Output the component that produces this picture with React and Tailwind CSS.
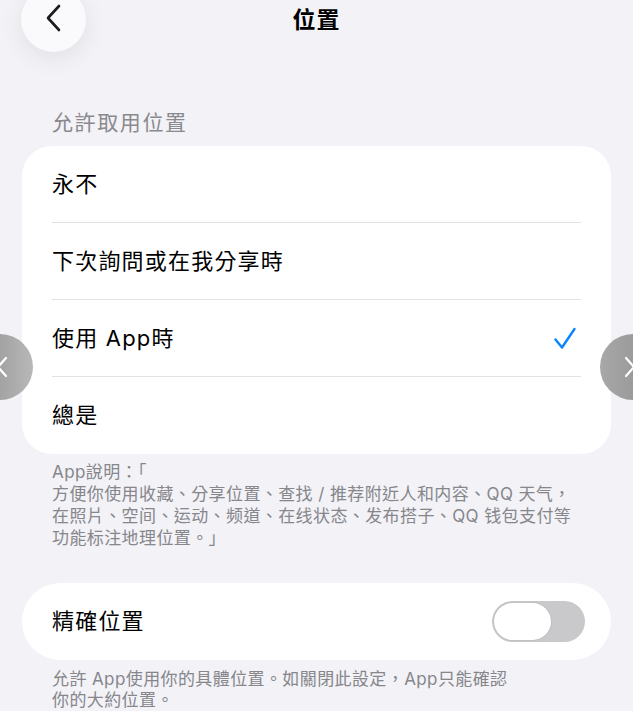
const font = { fontFamily: 'Inter, "Noto Sans CJK TC", "Noto Sans CJK SC", sans-serif' };

const options = ["永不", "下次詢問或在我分享時", "使用 App時", "總是"];

function Row({ label, checked, last }) {
  return (
    <div className="relative h-[77px] flex items-center justify-between pl-[30px] pr-[34px]">
      <span className="text-[22px] text-black tracking-[1.2px]">{label}</span>
      {checked && (
        <svg width="24" height="24" viewBox="0 0 24 24" fill="none" stroke="#0a84ff" strokeWidth="2.4" strokeLinecap="round" strokeLinejoin="round">
          <path d="M2.5 12.5 L9 20.5 L21.5 2" />
        </svg>
      )}
      {!last && <div className="absolute left-[30px] right-[30px] bottom-0 h-px bg-[#e2e2e6]" />}
    </div>
  );
}

export default function App() {
  return (
    <div className="relative w-[633px] h-[711px] overflow-hidden bg-[#f2f2f7]" style={font}>
      {/* header */}
      <header className="relative h-[40px] flex items-center justify-center">
        <button className="absolute left-[21px] top-[-13px] w-[65px] h-[65px] rounded-full bg-[#fafafd] shadow-[0_6px_24px_rgba(0,0,0,0.08)] flex items-end justify-center pb-[19px]">
          <svg width="20" height="30" viewBox="0 0 20 30" fill="none" stroke="#1c1c1e" strokeWidth="2.6" strokeLinecap="round" strokeLinejoin="round">
            <path d="M15 3 L4 15 L15 27" />
          </svg>
        </button>
        <h1 className="text-[23px] font-semibold text-black tracking-[1px]">位置</h1>
      </header>

      <div className="px-[22px]">
        <div className="mt-[69px] pl-[30px] text-[21px] leading-[28px] tracking-[1.6px] text-[#8a8a8e]">允許取用位置</div>

        <div className="mt-[9px] bg-white rounded-[30px]">
          {options.map((o, i) => (
            <Row key={o} label={o} checked={i === 2} last={i === options.length - 1} />
          ))}
        </div>

        <div className="mt-[7px] pl-[30px] pr-[10px] text-[17px] leading-[22px] tracking-[0.4px] text-[#86868b]">
          <p>App說明：「</p>
          <p>方便你使用收藏、分享位置、查找 / 推荐附近人和内容、QQ 天气，</p>
          <p>在照片、空间、运动、频道、在线状态、发布搭子、QQ 钱包支付等</p>
          <p>功能标注地理位置。」</p>
        </div>

        <div className="mt-[34px] h-[77px] bg-white rounded-[38px] flex items-center justify-between pl-[30px] pr-[26px]">
          <span className="text-[22px] text-black tracking-[1.2px]">精確位置</span>
          <div className="w-[93px] h-[41px] rounded-full bg-[#c9c9cc] p-[2px] flex items-center">
            <div className="w-[57px] h-[37px] rounded-full bg-white shadow-[0_0_0_1px_rgba(0,0,0,0.04)]" />
          </div>
        </div>

        <div className="mt-[9px] pl-[30px] text-[17px] leading-[21px] tracking-[0.4px] text-[#86868b]">
          <p>允許 App使用你的具體位置。如關閉此設定，App只能確認</p>
          <p>你的大約位置。</p>
        </div>
      </div>

      {/* side nav overlays */}
      <div className="absolute left-[-33px] top-[334px] w-[66px] h-[66px] rounded-full bg-gradient-to-r from-[#8e8e8e] to-[#b8b8b8] flex items-center justify-end pr-[26px]">
        <svg width="12" height="24" viewBox="0 0 12 24" fill="none" stroke="white" strokeWidth="2.2" strokeLinecap="round">
          <path d="M11 3 L3 12 L11 21" />
        </svg>
      </div>
      <div className="absolute right-[-33px] top-[334px] w-[66px] h-[66px] rounded-full bg-gradient-to-r from-[#a8a8a8] to-[#8e8e8e] flex items-center justify-start pl-[25px]">
        <svg width="12" height="24" viewBox="0 0 12 24" fill="none" stroke="white" strokeWidth="2.2" strokeLinecap="round">
          <path d="M1 3 L9 12 L1 21" />
        </svg>
      </div>
    </div>
  );
}
